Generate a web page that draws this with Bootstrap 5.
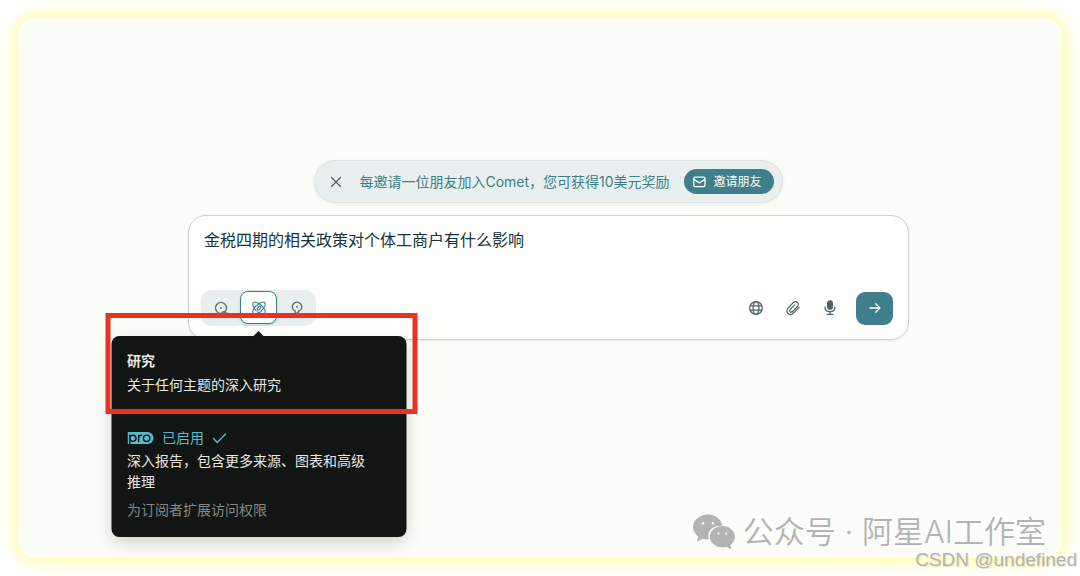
<!DOCTYPE html>
<html lang="zh-CN">
<head>
<meta charset="utf-8">
<meta name="viewport" content="width=device-width, initial-scale=1">
<title>研究</title>
<link href="https://cdn.jsdelivr.net/npm/bootstrap@5.3.0/dist/css/bootstrap.min.css" rel="stylesheet">
<style>
  :root { --teal: #3e7f8b; --ink: #13343b; --paper: #fcfdf9; --mist: #e9eeee; }
  body { font-family: Inter, "Noto Sans CJK SC", sans-serif; color: var(--ink); background: #fff; padding: 18px; }
  svg { display: block; flex: none; fill: none; stroke: currentColor; stroke-linecap: round; stroke-linejoin: round; }
  .stage { background: var(--paper); border-radius: 18px; box-shadow: 0 0 18px 2px #fffb8c; padding: 142px 16px 16px 33px; }
  .invite { background: var(--mist); border: 1px solid #dae2e2; box-shadow: 0 1px 4px rgba(0,0,0,.06); color: var(--teal); font-size: 14px; line-height: 20px; padding: 8px 8px 8px 14px; height: 43px; }
  .invite-close { color: #4d6064; line-height: 1; }
  .invite-msg { margin: 0 14px 0 16px; }
  .invite-btn { background: var(--teal); color: #fff; font-size: 12px; line-height: 17px; padding: 4px 12px 4px 9px; }
  .invite-btn:hover { background: #34707b; color: #fff; }
  .composer { max-width: 721px; background: #fefffc; border: 1px solid #ccd2d4; border-radius: 18px; box-shadow: 0 1px 3px rgba(0,0,0,.08); margin-top: 12px; padding: 12px 15px 13px 12px; }
  .prompt { color: var(--ink); font-size: 16px; line-height: 24px; height: 62px; padding: 0 3px; resize: none; }
  .prompt:focus { outline: none; }
  .modes { background: var(--mist); border-radius: 10px; padding: 1px; height: 36px; }
  .mode { width: 37px; height: 33px; border: 1px solid transparent; border-radius: 8px; padding: 0; color: #586d71; }
  .mode-current { margin: 0 1px; }
  .mode.active { color: var(--teal); background: #fff; border-color: var(--teal); box-shadow: 0 1px 3px rgba(62,127,139,.3); }
  .tool { width: 37px; height: 33px; padding: 0; color: #4c6266; border: 0; }
  .send { width: 37px; height: 33px; padding: 0; border-radius: 9px; background: var(--teal); color: #fff; border: 0; }
  .send:hover { background: #34707b; color: #fff; }
  .hint { left: 50%; top: 100%; margin-top: 11px; width: 295px; transform: translateX(-50%); background: #131514; color: #e6e7e2; border-radius: 8px; padding: 14px 16px 17px; font-size: 14px; line-height: 21px; box-shadow: 0 6px 16px rgba(0,0,0,.16); z-index: 5; }
  .hint::before { content: ""; position: absolute; left: 50%; top: -5px; margin-left: -6px; border: 6px solid transparent; border-top: 0; border-bottom-color: #131514; }
  .hint-text { width: 248px; }
  .hint-title { line-height: 22px; }
  .hint-line { margin-top: 2px; }
  .enabled { color: #56bccb; margin-top: 32px; }
  .quiet { color: #858784; margin-top: 7px; }
  .marker { border: 5px solid #ea3223; top: -23px; left: -6px; right: -11px; height: 101px; pointer-events: none; }
  .account { right: 34px; bottom: 22px; color: #b3b4b2; font-family: Inter, "Noto Sans CJK SC", sans-serif; font-weight: 350; font-size: 31px; line-height: 44px; z-index: 2; }
  .source-note { right: 3px; bottom: 4px; color: #b4b5b2; font-family: "Liberation Sans", sans-serif; font-size: 19px; line-height: 24px; text-shadow: 1px 1px 1px rgba(130,130,130,.25); z-index: 3; }
</style>
</head>
<body class="min-vh-100 d-flex position-relative">
<main class="stage flex-grow-1 d-flex flex-column align-items-center">
  <section class="invite rounded-pill d-flex align-items-center">
    <button type="button" class="invite-close btn p-0 border-0" aria-label="关闭">
      <svg width="14" height="14" viewBox="0 0 14 14" stroke-width="1.3"><path d="M2.5 2.5l9 9m0-9l-9 9"/></svg>
    </button>
    <span class="invite-msg">每邀请一位朋友加入Comet，您可获得10美元奖励</span>
    <button type="button" class="invite-btn btn border-0 rounded-pill d-flex align-items-center gap-2">
      <svg width="13" height="12" viewBox="0 0 13 12" stroke-width="1.3"><rect x=".8" y="1.2" width="11.2" height="9.4" rx="1.3"/><path d="M1 3.5l5.4 3.4 5.4-3.4"/></svg>邀请朋友
    </button>
  </section>

  <form class="composer w-100 position-relative" onsubmit="return false">
    <textarea aria-label="提问" class="prompt d-block w-100 border-0 bg-transparent">金税四期的相关政策对个体工商户有什么影响</textarea>
    <div class="d-flex align-items-center justify-content-between">
      <div class="modes d-flex">
        <button type="button" class="mode btn d-flex align-items-center justify-content-center" aria-label="搜索">
          <svg width="16" height="16" viewBox="0 0 16 16" stroke-width="1.3"><path d="M9.200 13.300A5.500 5.500 0 1 1 13.500 8c0 2-.8 3.400-2.200 4.500M9.200 12.400c1.300-1 2.300-.8 3.100.1.8 1 1.400 1.200 2.300.6"/><circle cx="8" cy="8" r=".9" fill="currentColor" stroke="none"/></svg>
        </button>
        <div class="mode-current position-relative">
          <button type="button" class="mode active btn d-flex align-items-center justify-content-center" aria-label="研究" aria-describedby="hint">
            <svg width="16" height="16" viewBox="0 0 16 16" stroke-width="1.1"><path d="M5.200 10.800C2.600 8.200 1 4.400 2.300 2.600c1.500-1.600 5.400.2 8.500 3.100M13.700 2.600c1.300 1.800-.6 5.500-3.300 8.200s-6.500 4.400-8.100 2.800c-1.200-1.700.4-5.200 3.400-8.200M13.700 13.600c1.200-1.700-.4-5.200-3-7.900M13.700 2.600c-1.500-1.500-5.300.1-8 2.800M13.700 13.600c-1.500 1.500-4.600.5-7.300-1.800"/><ellipse cx="8" cy="8.100" rx="2.300" ry="1.300" transform="rotate(-45 8 8.100)"/></svg>
          </button>
          <div id="hint" role="tooltip" class="hint position-absolute">
            <div class="hint-text">
              <div class="hint-title fw-bold">研究</div>
              <div class="hint-line">关于任何主题的深入研究</div>
              <div class="enabled d-flex align-items-center gap-2">
                <svg width="27" height="14" viewBox="0 0 27 14" role="img" aria-label="pro"><path d="M0 1h20a6 6 0 0 1 0 12H0z" fill="currentColor" stroke="none"/><g stroke="#131514" stroke-width="1.4"><path d="M2.3 13V4.2"/><circle cx="5.4" cy="7.3" r="3.1"/><path d="M11.1 10.5V4.3M11.1 7.2c0-2 1.1-3 2.9-2.9"/><circle cx="19.1" cy="7.3" r="3.2"/></g></svg>
                <span>已启用</span>
                <svg width="14" height="12" viewBox="0 0 14 12" stroke-width="1.4"><path d="M1 6.5l3.7 4L13 2"/></svg>
              </div>
              <div class="hint-line">深入报告，包含更多来源、图表和高级推理</div>
              <div class="quiet">为订阅者扩展访问权限</div>
            </div>
            <div class="marker position-absolute"></div>
          </div>
        </div>
        <button type="button" class="mode btn d-flex align-items-center justify-content-center" aria-label="实验室">
          <svg width="16" height="16" viewBox="0 0 16 16" stroke-width="1.3"><path d="M6.200 11.200a4.700 4.700 0 1 1 3.600 0M6.200 11v2.200h3.200V11M6.500 14.800h3"/><circle cx="8" cy="6.700" r=".9" fill="currentColor" stroke="none"/></svg>
        </button>
      </div>
      <div class="d-flex align-items-center">
        <button type="button" class="tool btn d-flex align-items-center justify-content-center" aria-label="来源">
          <svg width="16" height="16" viewBox="0 0 16 16" stroke-width="1.2"><circle cx="8" cy="8" r="6.3"/><ellipse cx="8" cy="8" rx="2.9" ry="6.3"/><path d="M2.300 5.800h11.400M2.300 10.200h11.400"/></svg>
        </button>
        <button type="button" class="tool btn d-flex align-items-center justify-content-center" aria-label="附件">
          <svg width="16" height="16" viewBox="0 0 16 16" stroke-width="1.2"><path d="M14.100 7.300l-5.400 5.600c-1.700 1.800-4.100 2.100-5.700.6s-1.400-4 .3-5.800l4.900-5c1.200-1.200 3-1.400 4.200-.3s1.200 2.900 0 4.100l-4.800 5c-.7.700-1.700.8-2.400.2s-.6-1.700.1-2.400L9.600 4.900"/></svg>
        </button>
        <button type="button" class="tool btn d-flex align-items-center justify-content-center me-2" aria-label="语音">
          <svg width="16" height="16" viewBox="0 0 16 16" stroke-width="1.3"><rect x="5.700" y="1" width="4.600" height="8.200" rx="2.300" fill="currentColor"/><path d="M3.100 7.200c0 2.800 2 4.500 4.900 4.500s4.900-1.700 4.900-4.500M8 11.700v2.600M5.300 14.400h5.400"/></svg>
        </button>
        <button type="submit" class="send btn d-flex align-items-center justify-content-center" aria-label="发送">
          <svg width="14" height="14" viewBox="0 0 14 14" stroke-width="1.3"><path d="M2 7h10M7.700 2.700L12 7l-4.300 4.300"/></svg>
        </button>
      </div>
    </div>
  </form>
</main>
<div class="account position-absolute d-flex align-items-center gap-2">
  <svg width="42" height="36" viewBox="0 0 42 36" stroke="none" aria-hidden="true"><path fill="#b3b4b2" d="M15 1C6.800 1 .500 6.300.500 13c0 3.900 2.100 7.100 5.400 9.400L4.500 27l5.200-2.800c1.800.5 3.400.8 5.600.7-2.200-7.700 3.900-14 13.500-13.600C27.500 5.200 21.900 1 15 1z"/><path fill="#b3b4b2" d="M29.500 12.500c-6.900 0-12.300 4.600-12.300 10.300S22.600 33 29.500 33c1.500 0 2.900-.2 4.200-.6l4.200 2.300-1.100-3.900c3-1.900 4.700-4.700 4.700-8 0-5.700-5.200-10.300-12-10.300z"/><g fill="#fcfdf9"><circle cx="10.300" cy="9.300" r="1.800"/><circle cx="20" cy="9.300" r="1.800"/><circle cx="25.500" cy="19.500" r="1.500"/><circle cx="33.300" cy="19.500" r="1.500"/></g></svg>
  <span>公众号 · 阿星AI工作室</span>
</div>
<div class="source-note position-absolute">CSDN @undefined</div>
<script src="https://cdn.jsdelivr.net/npm/bootstrap@5.3.0/dist/js/bootstrap.bundle.min.js"></script>
</body>
</html>
